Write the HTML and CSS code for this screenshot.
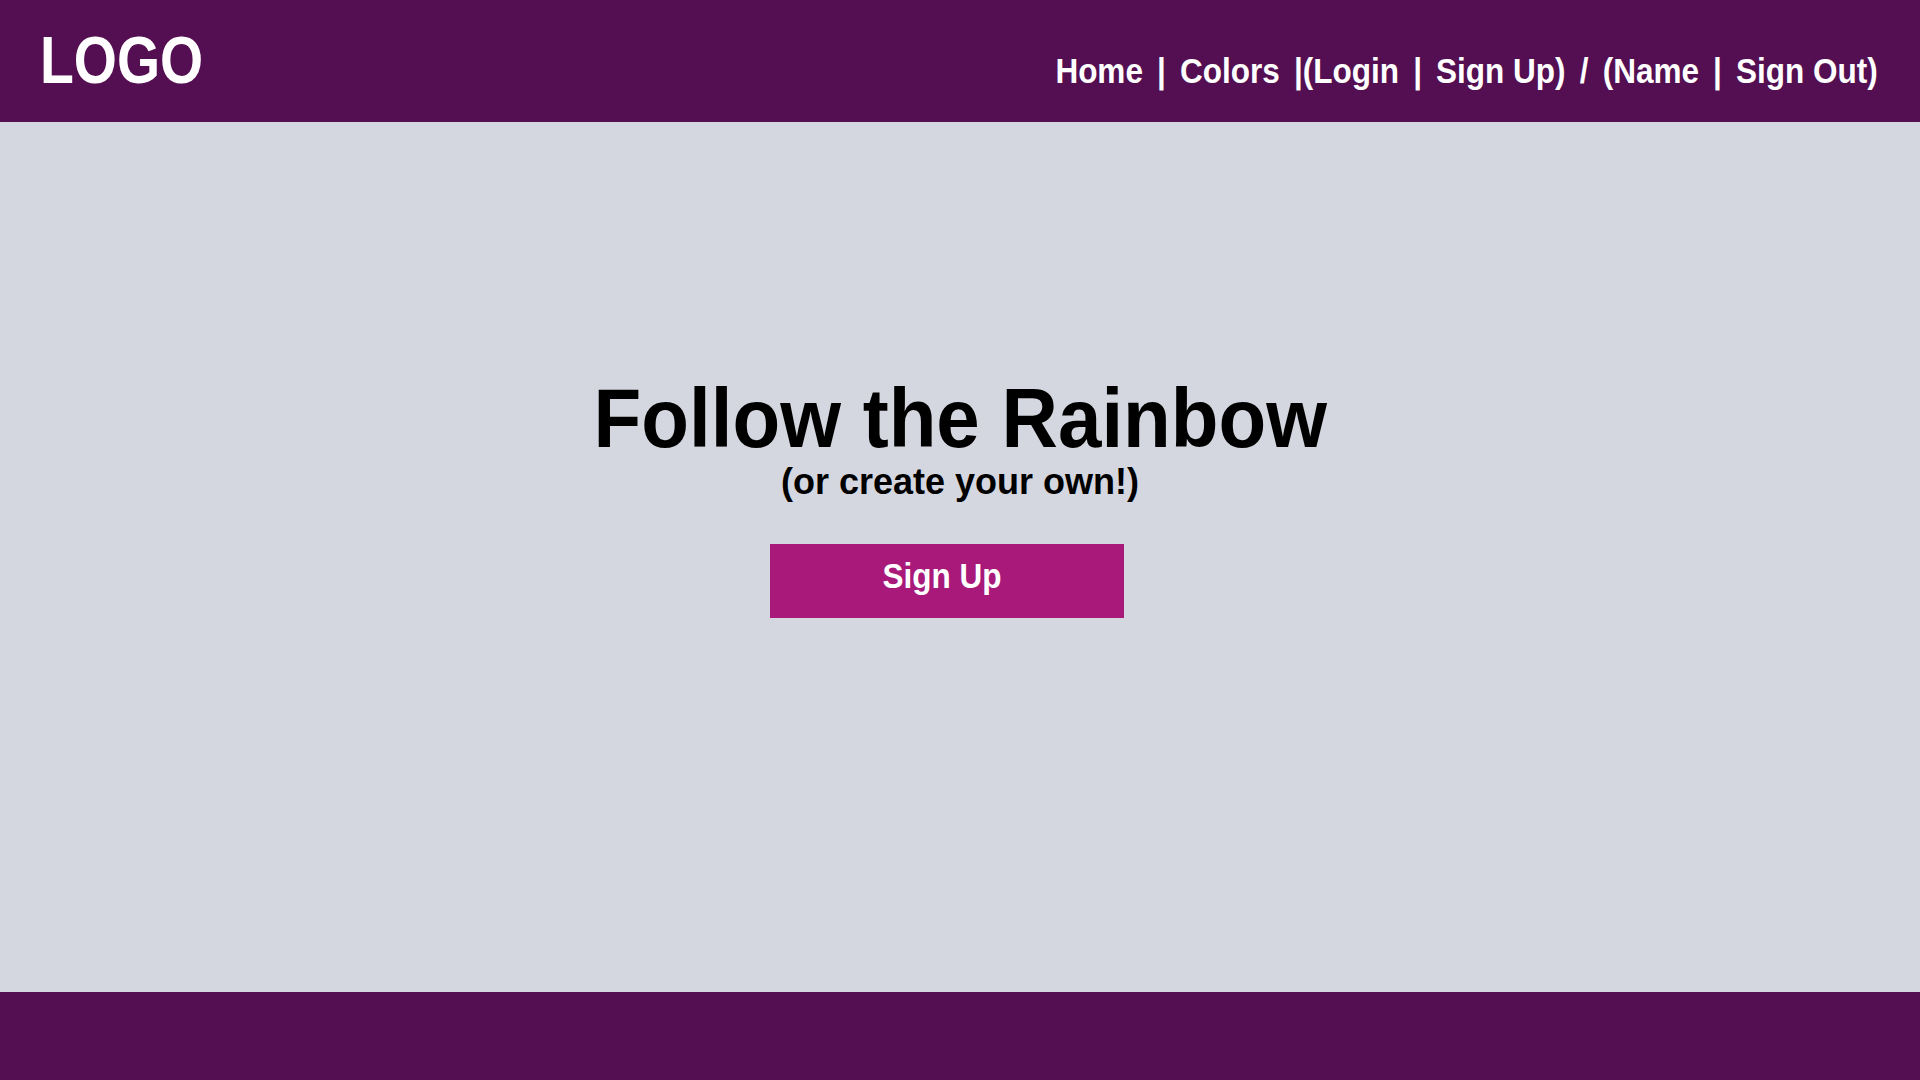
FILE: index.html
```html
<!DOCTYPE html>
<html lang="en">
<head>
<meta charset="utf-8">
<title>Follow the Rainbow</title>
<link rel="stylesheet" href="styles.css">
</head>
<body>
<div class="page">
  <header class="site-header">
    <div class="logo">LOGO</div>
    <nav class="nav"><a href="#">Home</a> | <a href="#">Colors</a> |(<a href="#">Login</a> | <a href="#">Sign Up</a>) / (<a href="#">Name</a> | <a href="#">Sign Out</a>)</nav>
  </header>
  <main class="hero">
    <h1 class="hero-title">Follow the Rainbow</h1>
    <p class="hero-sub">(or create your own!)</p>
    <a class="btn-signup" href="#"><span class="btn-label">Sign Up</span></a>
  </main>
  <footer class="site-footer"></footer>
</div>
</body>
</html>
```
FILE: styles.css
```css
* { box-sizing: border-box; }
html, body { margin: 0; padding: 0; }
body {
  background: #d4d7df;
  font-family: "Liberation Sans", Arial, sans-serif;
}
.page {
  display: flex;
  flex-direction: column;
  height: 1080px;
}
.site-header {
  height: 122px;
  flex: 0 0 122px;
  background: #540f52;
  color: #fff;
  display: flex;
  justify-content: space-between;
  align-items: baseline;
  padding: 27px 42px 0 40px;
}
.logo {
  font-weight: bold;
  font-size: 66px;
  line-height: 66px;
  transform: scaleX(0.84);
  transform-origin: left center;
}
.nav {
  font-weight: bold;
  font-size: 35px;
  line-height: 35px;
  white-space: pre;
  word-spacing: 6px;
  transform: scaleX(0.9);
  transform-origin: right center;
}
.nav a {
  color: #fff;
  text-decoration: none;
  word-spacing: 0;
}
.hero {
  flex: 1 1 auto;
  display: flex;
  flex-direction: column;
  align-items: center;
  padding-top: 254px;
}
.hero-title {
  margin: 0;
  font-size: 84px;
  line-height: 84px;
  font-weight: bold;
  color: #000;
  transform: scaleX(0.93);
}
.hero-sub {
  margin: 4px 0 0;
  font-size: 36px;
  line-height: 36px;
  font-weight: bold;
  color: #000;
}
.btn-signup {
  margin: 44px 26px 0 0;
  width: 354px;
  height: 74px;
  background: #a8197a;
  color: #fff;
  text-decoration: none;
  text-align: center;
  font-weight: bold;
  font-size: 35px;
  line-height: 64px;
  padding: 0 9px 10px 0;
}
.btn-label {
  display: inline-block;
  transform: scaleX(0.9);
}
.site-footer {
  flex: 0 0 88px;
  height: 88px;
  background: #540f52;
}
```
